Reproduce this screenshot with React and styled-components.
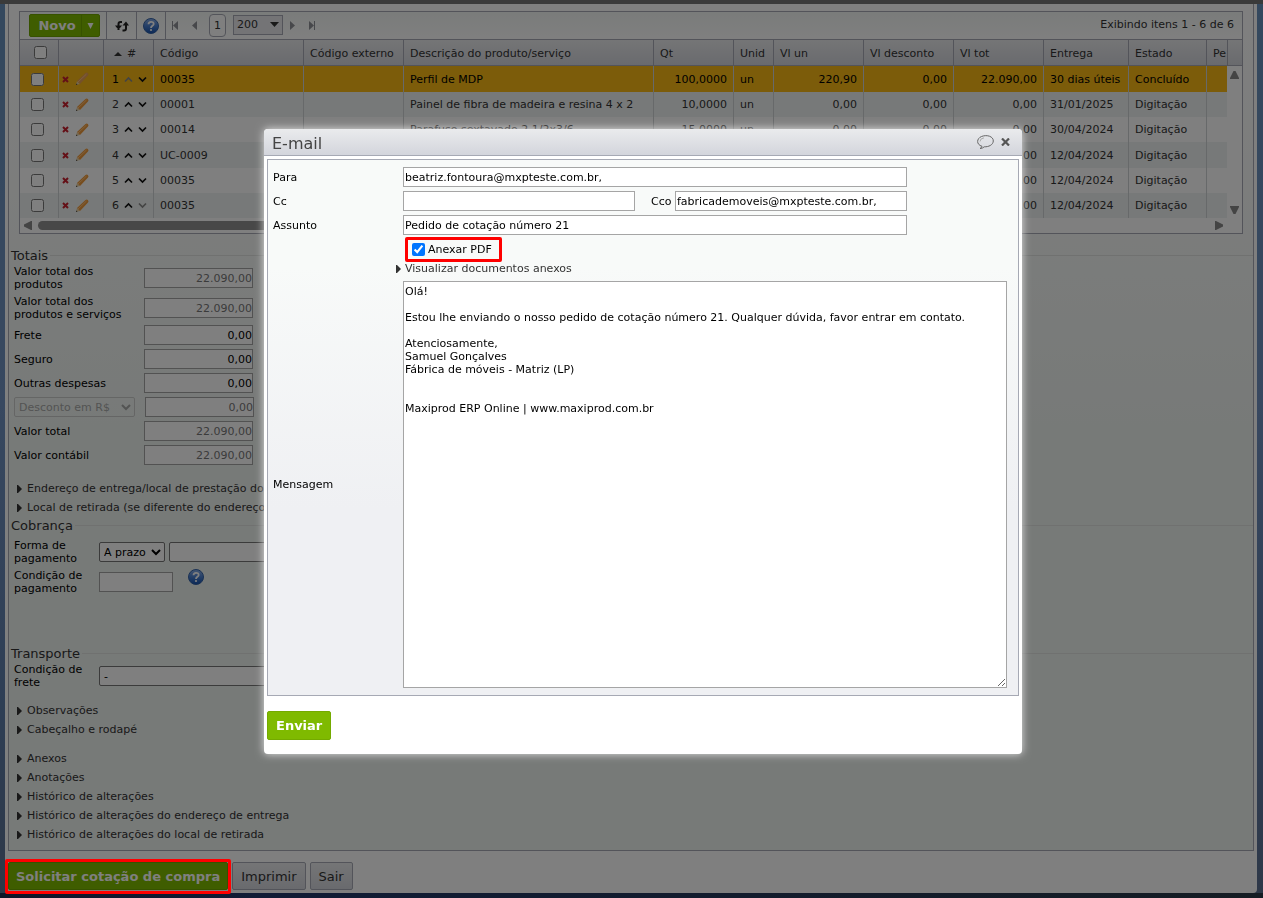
import styled, { createGlobalStyle, css } from "styled-components";

const colors = {
  border: "#a6a9b4",
  line: "#e0e3e1",
  text: "#333",
  green: "#7fba00",
  red: "#ff0000",
};

const columns = [
  { label: "Código", width: 150 },
  { label: "Código externo", width: 100 },
  { label: "Descrição do produto/serviço" },
  { label: "Qt", width: 80, right: true },
  { label: "Unid", width: 40 },
  { label: "Vl un", width: 90, right: true },
  { label: "Vl desconto", width: 90, right: true },
  { label: "Vl tot", width: 90, right: true },
  { label: "Entrega", width: 85 },
  { label: "Estado", width: 78 },
  { label: "Pe", width: 21 },
];

const items = [
  ["00035", "", "Perfil de MDP", "100,0000", "un", "220,90", "0,00", "22.090,00", "30 dias úteis", "Concluído", ""],
  ["00001", "", "Painel de fibra de madeira e resina 4 x 2", "10,0000", "un", "0,00", "0,00", "0,00", "31/01/2025", "Digitação", ""],
  ["00014", "", "Parafuso sextavado 2 1/2x3/6", "15,0000", "un", "0,00", "0,00", "0,00", "30/04/2024", "Digitação", ""],
  ["UC-0009", "", "", "", "", "", "", "0,00", "12/04/2024", "Digitação", ""],
  ["00035", "", "", "", "", "", "", "0,00", "12/04/2024", "Digitação", ""],
  ["00035", "", "", "", "", "", "", "0,00", "12/04/2024", "Digitação", ""],
];

const message = `Olá!

Estou lhe enviando o nosso pedido de cotação número 21. Qualquer dúvida, favor entrar em contato.

Atenciosamente,
Samuel Gonçalves
Fábrica de móveis - Matriz (LP)


Maxiprod ERP Online | www.maxiprod.com.br`;

function App() {
  return (
    <>
      <GlobalStyles />
      <Desktop>
        <Page>
          <Panel>
            <ItemsGrid />
            <Totals />
            <Billing />
            <Transport />
            <DisclosureList>
              <Disclosure>Observações</Disclosure>
              <Disclosure>Cabeçalho e rodapé</Disclosure>
            </DisclosureList>
            <DisclosureList>
              <Disclosure>Anexos</Disclosure>
              <Disclosure>Anotações</Disclosure>
              <Disclosure>Histórico de alterações</Disclosure>
              <Disclosure>Histórico de alterações do endereço de entrega</Disclosure>
              <Disclosure>Histórico de alterações do local de retirada</Disclosure>
            </DisclosureList>
          </Panel>
          <Footer>
            <Highlighted>
              <FooterButton $primary>Solicitar cotação de compra</FooterButton>
            </Highlighted>
            <FooterButton>Imprimir</FooterButton>
            <FooterButton>Sair</FooterButton>
          </Footer>
        </Page>
      </Desktop>
      <Overlay>
        <EmailDialog />
      </Overlay>
    </>
  );
}

function ItemsGrid() {
  return (
    <Grid>
      <Toolbar>
        <SplitButton>
          <NewButton>Novo</NewButton>
          <NewMenuButton aria-label="Mais opções">
            <svg width="7" height="6" viewBox="0 0 7 6">
              <path d="M.5 0h6L3.500 6z" fill="#fff" />
            </svg>
          </NewMenuButton>
        </SplitButton>
        <ToolCell>
          <IconButton aria-label="Atualizar">
            <RefreshIcon />
          </IconButton>
        </ToolCell>
        <ToolCell>
          <IconButton aria-label="Ajuda">
            <HelpIcon />
          </IconButton>
        </ToolCell>
        <Pager>
          <PagerButton aria-label="Primeira página">
            <PagerArrow bar />
          </PagerButton>
          <PagerButton aria-label="Página anterior">
            <PagerArrow />
          </PagerButton>
          <CurrentPage>1</CurrentPage>
          <PageSize>
            <PageSizeSelect aria-label="Itens por página" defaultValue="200">
              <option>200</option>
            </PageSizeSelect>
            <svg width="9" height="5" viewBox="0 0 9 5">
              <path d="M0 0h9L4.500 5z" fill="#333" />
            </svg>
          </PageSize>
          <PagerButton aria-label="Próxima página">
            <PagerArrow next />
          </PagerButton>
          <PagerButton aria-label="Última página">
            <PagerArrow next bar />
          </PagerButton>
        </Pager>
        <Count>Exibindo itens 1 - 6 de 6</Count>
      </Toolbar>
      <TableArea>
        <Table>
          <colgroup>
            <col width="38" />
            <col width="45" />
            <col width="50" />
            {columns.map((column) => (
              <col key={column.label} width={column.width} />
            ))}
          </colgroup>
          <thead>
            <tr>
              <HeadCell $check>
                <CheckBox type="checkbox" aria-label="Selecionar todos" />
              </HeadCell>
              <HeadCell />
              <HeadCell>
                <SortLabel>
                  <svg width="8" height="4" viewBox="0 0 8 4">
                    <path d="M0 4h8L4 0z" fill="#333" />
                  </svg>
                  #
                </SortLabel>
              </HeadCell>
              {columns.map((column) => (
                <HeadCell key={column.label}>{column.label}</HeadCell>
              ))}
            </tr>
          </thead>
          <tbody>
            {items.map((item, index) => (
              <Row key={index}>
                <Cell $check>
                  <CheckBox type="checkbox" aria-label={`Selecionar item ${index + 1}`} />
                </Cell>
                <Cell $tight>
                  <RowTools>
                    <IconButton aria-label="Excluir">
                      <DeleteIcon />
                    </IconButton>
                    <IconButton aria-label="Editar">
                      <PencilIcon faded={index === 0} />
                    </IconButton>
                  </RowTools>
                </Cell>
                <Cell>
                  <OrderTools>
                    {index + 1}
                    <IconButton aria-label="Mover para cima">
                      <Chevron up faded={index === 0} />
                    </IconButton>
                    <IconButton aria-label="Mover para baixo">
                      <Chevron faded={index === items.length - 1} />
                    </IconButton>
                  </OrderTools>
                </Cell>
                {item.map((value, i) => (
                  <Cell key={columns[i].label} $right={columns[i].right}>
                    {value}
                  </Cell>
                ))}
              </Row>
            ))}
          </tbody>
        </Table>
        <VerticalRail>
          <RailHead />
          <svg width="9" height="8" viewBox="0 0 9 8">
            <path d="M0 8V7L3.500 0h2L9 7v1z" fill="#888" />
          </svg>
          <svg width="9" height="8" viewBox="0 0 9 8">
            <path d="M0 0v1l3.500 7h2L9 1V0z" fill="#888" />
          </svg>
        </VerticalRail>
      </TableArea>
      <HorizontalRail>
        <svg width="8" height="9" viewBox="0 0 8 9">
          <path d="M8 0H7L0 3.500v2L7 9h1z" fill="#888" />
        </svg>
        <Track>
          <Thumb />
        </Track>
        <svg width="8" height="9" viewBox="0 0 8 9">
          <path d="M0 0h1l7 3.500v2L1 9H0z" fill="#888" />
        </svg>
      </HorizontalRail>
    </Grid>
  );
}

function Totals() {
  return (
    <Section>
      <Legend>Totais</Legend>
      <TotalRow label="Valor total dos produtos" value="22.090,00" disabled />
      <TotalRow label="Valor total dos produtos e serviços" value="22.090,00" disabled />
      <TotalRow label="Frete" value="0,00" />
      <TotalRow label="Seguro" value="0,00" />
      <TotalRow label="Outras despesas" value="0,00" />
      <FieldRow>
        <Select aria-label="Tipo de desconto" $width={121} disabled>
          <option>Desconto em R$</option>
        </Select>
        <TextInput aria-label="Desconto" $width={109} $right $muted defaultValue="0,00" />
      </FieldRow>
      <TotalRow label="Valor total" value="22.090,00" disabled />
      <TotalRow label="Valor contábil" value="22.090,00" disabled />
      <DisclosureList $first>
        <Disclosure>Endereço de entrega/local de prestação do serviço</Disclosure>
        <Disclosure>Local de retirada (se diferente do endereço acima)</Disclosure>
      </DisclosureList>
    </Section>
  );
}

function TotalRow({ label, value, disabled }) {
  return (
    <FieldRow as="label">
      <LabelText $width={120}>{label}</LabelText>
      <TextInput $width={109} $right $muted={disabled} readOnly={disabled} defaultValue={value} />
    </FieldRow>
  );
}

function Billing() {
  return (
    <Section $tall>
      <Legend>Cobrança</Legend>
      <FieldRow $gap={4}>
        <LabelText as="label" htmlFor="payment" $width={81}>
          Forma de pagamento
        </LabelText>
        <Select id="payment" $width={66}>
          <option>A prazo</option>
        </Select>
        <Select aria-label="Conta" $width={200}>
          <option></option>
        </Select>
      </FieldRow>
      <FieldRow $gap={4}>
        <LabelText as="label" htmlFor="terms" $width={81}>
          Condição de pagamento
        </LabelText>
        <TextInput id="terms" $width={74} />
        <HelpLink href="#" aria-label="Ajuda">
          <HelpIcon />
        </HelpLink>
      </FieldRow>
    </Section>
  );
}

function Transport() {
  return (
    <Section>
      <Legend>Transporte</Legend>
      <FieldRow $gap={4}>
        <LabelText as="label" htmlFor="freight" $width={81}>
          Condição de frete
        </LabelText>
        <Select id="freight" $width={300}>
          <option>-</option>
        </Select>
      </FieldRow>
    </Section>
  );
}

function EmailDialog() {
  return (
    <Dialog role="dialog" aria-labelledby="dialog-title">
      <TitleBar>
        <Title id="dialog-title">E-mail</Title>
        <IconButton aria-label="Comentário">
          <BalloonIcon />
        </IconButton>
        <IconButton aria-label="Fechar">
          <CloseIcon />
        </IconButton>
      </TitleBar>
      <Form>
        <label htmlFor="to">Para</label>
        <Fields>
          <TextInput id="to" defaultValue="beatriz.fontoura@mxpteste.com.br," />
        </Fields>
        <label htmlFor="cc">Cc</label>
        <Fields>
          <TextInput id="cc" />
          <CcoLabel htmlFor="cco">Cco</CcoLabel>
          <TextInput id="cco" defaultValue="fabricademoveis@mxpteste.com.br," />
        </Fields>
        <label htmlFor="subject">Assunto</label>
        <Fields>
          <TextInput id="subject" defaultValue="Pedido de cotação número 21" />
        </Fields>
        <Attachments>
          <AttachLabel>
            <CheckBox type="checkbox" defaultChecked />
            Anexar PDF
          </AttachLabel>
          <Disclosure $flush>Visualizar documentos anexos</Disclosure>
        </Attachments>
        <label htmlFor="message">Mensagem</label>
        <Message id="message" defaultValue={message} spellCheck={false} />
      </Form>
      <SendButton>Enviar</SendButton>
    </Dialog>
  );
}

function Disclosure({ children, $flush }) {
  return (
    <DisclosureLink href="#" $flush={$flush}>
      <svg width="5" height="8" viewBox="0 0 5 8">
        <path d="M0 0h1l4 4-4 4H0z" fill="#333" />
      </svg>
      {children}
    </DisclosureLink>
  );
}

function RefreshIcon() {
  return (
    <svg width="14" height="12" viewBox="0 0 14 12" fill="none" stroke="#222" strokeWidth="2">
      <path d="M7 2H5.500Q3.500 2 3.500 4v6M7.500 10.500H9q2 0 2-2V3" />
      <path d="M0 5.500h7L5 8H2zM7.500 5.500H14L11 1.500z" fill="#222" stroke="none" />
    </svg>
  );
}

function HelpIcon() {
  return (
    <svg width="16" height="16" viewBox="0 0 16 16">
      <defs>
        <linearGradient id="help" x2="0" y2="1">
          <stop offset="0" stopColor="#8aaee8" />
          <stop offset=".5" stopColor="#4a80d0" />
          <stop offset="1" stopColor="#1650ac" />
        </linearGradient>
      </defs>
      <circle cx="8" cy="8" r="7.500" fill="url(#help)" stroke="#3564a8" />
      <path
        d="M5.500 6.300C5.500 3 10.700 3 10.700 6c0 1.900-2.700 1.800-2.700 4"
        fill="none"
        stroke="#fff"
        strokeWidth="1.800"
      />
      <circle cx="8" cy="12" r="1.100" fill="#fff" />
    </svg>
  );
}

function PagerArrow({ next, bar }) {
  return (
    <svg width="7" height="9" viewBox="0 0 7 9" fill="#8e9096">
      {next ? <path d="M0 0l5 4.500L0 9z" /> : <path d="M7 0v9L2 4.500z" />}
      {bar && <path d={next ? "M5 0h1v9H5z" : "M1 0h1v9H1z"} />}
    </svg>
  );
}

function DeleteIcon() {
  return (
    <svg width="7" height="7" viewBox="0 0 7 7">
      <path d="M1 1l5 5M6 1L1 6" stroke="#c8202e" strokeWidth="2" />
    </svg>
  );
}

function PencilIcon({ faded }) {
  return (
    <svg width="14" height="14" viewBox="0 0 14 14">
      <path d="M1 13l1-4 3 3z" fill="#e8cfa0" />
      <path d="M2 9L10.500 1q1.500-1 2.500.3t0 2.200L5 12z" fill={faded ? "#e8a058" : "#ee9a3c"} />
      <path d="M3 10L11.500 2" stroke="#ffc27a" />
      <path d="M1 13l.4-1.500 1.100 1z" fill="#333" />
    </svg>
  );
}

function Chevron({ up, faded }) {
  return (
    <svg width="9" height="7" viewBox="0 0 9 7" fill="none" stroke={faded ? "#888" : "#111"} strokeWidth="1.700">
      <path d={up ? "M1 5.500l3.500-3.500L8 5.500" : "M1 1.500L4.500 5 8 1.500"} />
    </svg>
  );
}

function BalloonIcon() {
  return (
    <svg width="17" height="15" viewBox="0 0 17 15" fill="none" stroke="#666">
      <path d="M5 11.300C-1 9.500-.5 3.500 4.500 1.500 10-.7 16.500 1.500 16.300 6c-.2 4-4.800 6-9 5.800Q5.500 13.500 3 13.500 5 12.500 5 11.300z" />
      <path d="M3 6.500Q3 3.500 7 2.800" stroke="#aaa" />
    </svg>
  );
}

function CloseIcon() {
  return (
    <svg width="9" height="8" viewBox="0 0 9 8">
      <path d="M1 .5l7 7M8 .5l-7 7" stroke="#555" strokeWidth="2.200" />
    </svg>
  );
}

const GlobalStyles = createGlobalStyle`
  * {
    box-sizing: border-box;
  }

  body {
    margin: 0;
    background: #1c2a50;
    color: #000;
    font: 11px/13px "DejaVu Sans", sans-serif;
  }

  button,
  input,
  select,
  textarea {
    margin: 0;
    color: inherit;
    font: inherit;
  }
`;

const Desktop = styled.div`
  min-height: 100vh;
  padding: 0 6px 5px 5px;
  border-top: 4px solid #747474;
  background:
    linear-gradient(90deg, #1c2a50, #22386c 20%, #2c3a48) no-repeat bottom / 100% 5px,
    linear-gradient(#6890bc, #7090c0 45%, #5c7ba8 80%, #5c7090);
`;

const Page = styled.div`
  padding: 0 3px 3px;
  border-radius: 0 0 4px 4px;
  background: #fff;
`;

const Panel = styled.div`
  padding: 7px 0 6px;
  border: 1px solid ${colors.border};
  border-top: 0;
  background: linear-gradient(#fff, #eff4f1 50%);
`;

const Grid = styled.section`
  margin: 0 10px 13px;
  border: 1px solid ${colors.border};
  background: #fff;
  color: ${colors.text};
`;

const Toolbar = styled.div`
  display: flex;
  align-items: stretch;
  height: 27px;
  padding-left: 9px;
  background: linear-gradient(#f4f8f6, #fff);
`;

const SplitButton = styled.div`
  display: flex;
  align-self: center;
  height: 23px;
  margin-right: 6px;
  border: 1px solid #6fa400;
  border-radius: 2px;
  background: ${colors.green};
`;

const NewButton = styled.button`
  width: 51px;
  padding: 0 0 0 3px;
  border: 0;
  background: none;
  color: #fff;
  font-size: 13px;
  font-weight: bold;
`;

const NewMenuButton = styled.button`
  width: 18px;
  padding: 0;
  border: 0;
  border-left: 1px solid #6fa400;
  background: none;
`;

const ToolCell = styled.div`
  display: flex;
  align-items: center;
  justify-content: center;
  width: 30px;
  border-left: 1px solid ${colors.border};

  & + & {
    width: 29px;
  }
`;

const IconButton = styled.button`
  display: flex;
  padding: 0;
  border: 0;
  background: none;
`;

const Pager = styled.div`
  display: flex;
  align-items: center;
  padding-left: 5px;
  border-left: 1px solid ${colors.border};
`;

const PagerButton = styled(IconButton)`
  margin-right: 12px;
`;

const CurrentPage = styled.span`
  width: 17px;
  margin-right: 7px;
  padding: 4px 0;
  border: 1px solid ${colors.border};
  border-radius: 4px;
  background: #fff;
  text-align: center;
`;

const PageSize = styled.label`
  display: flex;
  align-items: center;
  width: 50px;
  height: 20px;
  margin: 0 7px 2px 0;
  border: 1px solid ${colors.border};
  background: #e8e9ed;
`;

const PageSizeSelect = styled.select`
  width: 36px;
  padding: 0 0 0 3px;
  border: 0;
  appearance: none;
  background: none;
`;

const Count = styled.span`
  align-self: center;
  margin: 0 8px 2px auto;
`;

const headGradient = css`
  border-top: 1px solid ${colors.border};
  border-bottom: 1px solid ${colors.border};
  background: linear-gradient(#eaebed, #d3d5dc);
`;

const TableArea = styled.div`
  display: grid;
  grid-template-columns: 1fr 15px;
`;

const Table = styled.table`
  width: 100%;
  table-layout: fixed;
  border-collapse: separate;
  border-spacing: 0;
`;

const HeadCell = styled.th`
  ${headGradient};
  height: 27px;
  padding: ${({ $check }) => ($check ? "0 0 0 14px" : "2px 0 0 6px")};
  overflow: hidden;
  font-weight: normal;
  text-align: left;
  white-space: nowrap;

  & + & {
    border-left: 1px solid ${colors.border};
  }
`;

const SortLabel = styled.span`
  display: flex;
  align-items: center;
  gap: 5px;
  padding-left: 4px;
`;

const Row = styled.tr`
  height: 25px;
  background: #fff;

  &:nth-child(3n + 1) {
    height: 26px;
  }

  &:nth-child(even) {
    background: #eff3f2;
  }

  &:first-child {
    background: #f9b814;
    color: #000;
  }
`;

const Cell = styled.td`
  padding: 0 6px;
  overflow: hidden;
  text-align: ${({ $right }) => ($right ? "right" : "left")};
  white-space: nowrap;

  & + & {
    border-left: 1px solid #cfd2d4;
  }

  ${({ $check }) => $check && "padding: 0 0 0 11px;"}
  ${({ $tight }) => $tight && "padding: 0 3px;"}
`;

const CheckBox = styled.input`
  display: block;
  width: 13px;
  height: 13px;
`;

const RowTools = styled.div`
  display: flex;
  align-items: center;
  gap: 6px;
`;

const OrderTools = styled.div`
  display: flex;
  align-items: center;
  gap: 5px;
  margin: 0 -4px 0 2px;
`;

const VerticalRail = styled.div`
  display: flex;
  flex-direction: column;
  align-items: center;
  padding-bottom: 4px;

  svg:last-child {
    margin-top: auto;
  }
`;

const RailHead = styled.div`
  ${headGradient};
  align-self: stretch;
  height: 27px;
  margin-bottom: 5px;
  border-left: 1px solid ${colors.border};
`;

const HorizontalRail = styled.div`
  display: flex;
  align-items: center;
  height: 15px;
  padding: 0 19px 0 4px;
`;

const Track = styled.div`
  flex: 1;
  padding: 0 6px;
`;

const Thumb = styled.div`
  width: 70%;
  height: 9px;
  border-radius: 5px;
  background: #909090;
`;

const Legend = styled.h2`
  display: flex;
  align-items: center;
  gap: 2px;
  height: 16px;
  margin: 0;
  padding-left: 2px;
  color: ${colors.text};
  font-size: 13px;
  font-weight: normal;

  &::after {
    flex: 1;
    height: 1px;
    background: ${colors.line};
    content: "";
  }
`;

const Section = styled.section`
  min-height: ${({ $tall }) => ($tall ? "128px" : "0")};

  ${Legend} {
    margin-bottom: ${({ $tall }) => ($tall ? "4px" : "0")};
  }
`;

const FieldRow = styled.div`
  display: flex;
  align-items: center;
  gap: ${({ $gap }) => $gap || 10}px;
  min-height: 24px;
  padding: 2px 5px;
`;

const LabelText = styled.span`
  width: ${({ $width }) => $width}px;
`;

const TextInput = styled.input`
  width: ${({ $width }) => ($width ? `${$width}px` : "100%")};
  height: 20px;
  padding: ${({ $right }) => ($right ? "1px 0" : "1px")};
  border: 1px solid #a5a5a5;
  background: #fff;
  color: ${({ $muted }) => ($muted ? "#777" : "#000")};
  text-align: ${({ $right }) => ($right ? "right" : "left")};
`;

const Select = styled.select`
  width: ${({ $width }) => $width}px;
  height: 20px;
  padding: 0;
  border: 1px solid #767676;
  border-radius: 2px;
  background: #fff;

  &:disabled {
    border-color: #bbb;
    background: transparent;
    color: #888;
  }
`;

const HelpLink = styled.a`
  align-self: flex-start;
  margin-left: 11px;
`;

const DisclosureList = styled.nav`
  display: flex;
  flex-direction: column;
  margin-top: ${({ $first }) => ($first ? "12px" : "10px")};
`;

const DisclosureLink = styled.a`
  display: flex;
  align-items: center;
  gap: ${({ $flush }) => ($flush ? "4px" : "5px")};
  height: ${({ $flush }) => ($flush ? "13px" : "19px")};
  padding-left: ${({ $flush }) => ($flush ? "0" : "8px")};
  color: ${colors.text};
  text-decoration: none;
  white-space: nowrap;
`;

const Footer = styled.footer`
  display: flex;
  gap: 4px;
  padding-top: 11px;
`;

const FooterButton = styled.button`
  height: 28px;
  padding: 0 ${({ $primary }) => ($primary ? 7 : 8)}px;
  border: 1px solid ${({ $primary }) => ($primary ? "#6fa400" : colors.border)};
  border-radius: 2px;
  background: ${({ $primary }) => ($primary ? colors.green : "linear-gradient(#eaebed, #d3d5dc)")};
  color: ${({ $primary }) => ($primary ? "#fff" : colors.text)};
  font-size: 13px;
  font-weight: ${({ $primary }) => ($primary ? "bold" : "normal")};
`;

/* the frame stays bright above the dimmed page */
const Highlighted = styled.div`
  position: relative;

  &::after {
    position: absolute;
    z-index: 2;
    inset: -3px -3px -4px;
    border: 3px solid ${colors.red};
    border-radius: 2px;
    content: "";
    pointer-events: none;
  }
`;

const Overlay = styled.div`
  position: fixed;
  z-index: 1;
  inset: 0;
  display: flex;
  align-items: flex-start;
  padding: 129px 241px 0 264px;
  background: rgba(0, 0, 0, 0.5);
`;

const Dialog = styled.div`
  flex: 1;
  padding-bottom: 14px;
  border-radius: 4px;
  background: #fff;
  box-shadow: 0 0 9px rgba(255, 255, 255, 0.8);
`;

const TitleBar = styled.header`
  display: flex;
  align-items: center;
  gap: 7px;
  height: 27px;
  padding: 0 12px 0 8px;
  border-bottom: 1px solid ${colors.border};
  border-radius: 4px 4px 0 0;
  background: linear-gradient(#eaebed, #d3d5dc);
`;

const Title = styled.h1`
  flex: 1;
  margin: 4px 0 0;
  color: #444;
  font-size: 16px;
  font-weight: normal;
  line-height: 20px;
`;

const Form = styled.form`
  display: grid;
  grid-template-columns: 130px 1fr;
  row-gap: 4px;
  align-items: center;
  margin: 3px 3px 15px;
  padding: 7px 11px 7px 5px;
  border: 1px solid ${colors.border};
  background: linear-gradient(#f8faf9 20%, #eff0f3 65%);
`;

const Fields = styled.div`
  display: flex;
  align-items: center;
  width: 504px;
  max-width: 100%;
`;

const CcoLabel = styled.label`
  flex: none;
  width: 40px;
  padding-left: 16px;
`;

const Attachments = styled.div`
  grid-column: 2;
  display: flex;
  flex-direction: column;
  align-items: flex-start;
  margin: -2px 0 2px -7px;
`;

const AttachLabel = styled.label`
  display: flex;
  align-items: center;
  gap: 3px;
  height: 25px;
  margin-left: 9px;
  padding: 0 7px 0 4px;
  border: 3px solid ${colors.red};
  border-radius: 2px;
`;

const Message = styled.textarea`
  display: block;
  width: 100%;
  height: 407px;
  padding: 3px 1px;
  border: 1px solid #a5a5a5;
  background: #fff;
`;

const SendButton = styled.button`
  display: block;
  height: 29px;
  margin-left: 3px;
  padding: 0 8px;
  border: 1px solid #74aa00;
  border-radius: 2px;
  background: ${colors.green};
  color: #fff;
  font-size: 13px;
  font-weight: bold;
`;

export default App;
